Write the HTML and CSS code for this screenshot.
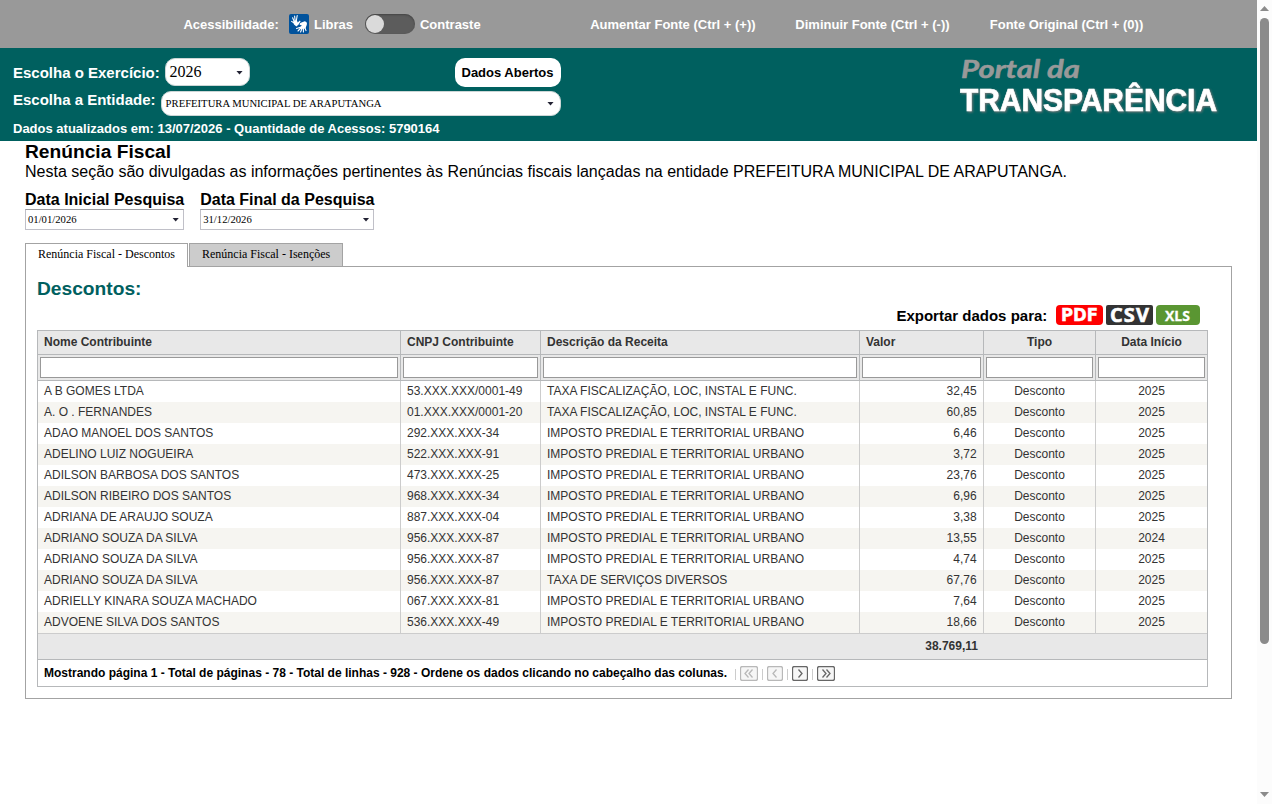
FILE: index.html
```html
<!DOCTYPE html>
<html lang="pt-br">
<head>
    <meta charset="UTF-8">
    <meta name="viewport" content="width=device-width, initial-scale=1.0">
    <title>Portal da Transparência</title>
    <link rel="stylesheet" href="styles.css">
</head>
<body>
    <div class="pagina">
        <div class="acessibilidade">
            <span class="rotulo">Acessibilidade:</span>
            <svg class="libras" width="20" height="20" viewBox="0 0 20 20">
                <rect width="20" height="20" rx="2" fill="#00529c"/>
                <g fill="none" stroke="#fff" stroke-linecap="round" stroke-linejoin="round">
                    <path stroke-width="1.1" d="M5.2 7.5L3.6 3.8M6.2 7L5.6 2M7.3 7L8.2 1.5M4.8 8.8L2.6 7.4"/>
                    <path stroke-width="1.1" d="M11.5 13.2L7.6 14.6M11.8 14L9 17M13 14.5L11.6 18M14.4 14.5V17.9M15.8 13.5L17 16.6"/>
                </g>
                <path fill="#fff" d="M4.2 7.4L7.9 6.2L8.7 8.4L10.9 6.6L11.6 7.3L9.6 10.6L7.4 12.4L5 10.6Z"/>
                <path fill="#fff" d="M11.2 8.9L15.7 7.2C17.7 7.4 18.4 9.3 17.7 11L16.4 14.6L12 15L10.8 13.2L12.9 11.4L10.6 10.8Z"/>
            </svg>
            <span class="texto-libras">Libras</span>
            <span class="chave"><span class="chave-botao"></span></span>
            <span class="texto-contraste">Contraste</span>
            <span class="aumentar">Aumentar Fonte (Ctrl + (+))</span>
            <span class="diminuir">Diminuir Fonte (Ctrl + (-))</span>
            <span>Fonte Original (Ctrl + (0))</span>
        </div>

        <div class="topo">
            <div class="filtros">
                <div class="linha-exercicio">
                    <label>Escolha o Exercício:</label>
                    <div class="combo combo-ano">2026<i class="seta"></i></div>
                    <button type="button" class="dados-abertos">Dados Abertos</button>
                </div>
                <div class="linha-entidade">
                    <label>Escolha a Entidade:</label>
                    <div class="combo combo-entidade">PREFEITURA MUNICIPAL DE ARAPUTANGA<i class="seta"></i></div>
                </div>
                <div class="atualizado">Dados atualizados em: 13/07/2026 - Quantidade de Acessos: 5790164</div>
            </div>
            <svg class="logo" width="270" height="74" viewBox="0 0 270 74">
                <text class="logo-portal" x="6" y="30" textLength="119" lengthAdjust="spacingAndGlyphs">Portal da</text>
                <text class="logo-nome" x="5" y="63" textLength="257" lengthAdjust="spacingAndGlyphs">TRANSPARÊNCIA</text>
            </svg>
        </div>

        <div class="conteudo">
            <h1>Renúncia Fiscal</h1>
            <p class="descricao">Nesta seção são divulgadas as informações pertinentes às Renúncias fiscais lançadas na entidade PREFEITURA MUNICIPAL DE ARAPUTANGA.</p>

            <div class="datas">
                <div class="data">
                    <label>Data Inicial Pesquisa</label>
                    <div class="data-campo">01/01/2026<i class="seta"></i></div>
                </div>
                <div class="data">
                    <label>Data Final da Pesquisa</label>
                    <div class="data-campo">31/12/2026<i class="seta"></i></div>
                </div>
            </div>

            <div class="abas">
                <div class="aba ativa">Renúncia Fiscal - Descontos</div>
                <div class="aba">Renúncia Fiscal - Isenções</div>
            </div>

            <div class="painel">
                <h2>Descontos:</h2>
                <div class="exportar">
                    <span>Exportar dados para:</span>
                    <svg width="47" height="20" viewBox="0 0 47 20">
                        <rect width="47" height="20" rx="4" fill="#f00"/>
                        <text class="texto-pdf" x="5" y="16" textLength="37" lengthAdjust="spacingAndGlyphs">PDF</text>
                    </svg>
                    <svg width="47" height="20" viewBox="0 0 47 20">
                        <rect width="47" height="20" rx="2" fill="#333"/>
                        <text class="texto-csv" x="4" y="17" textLength="39" lengthAdjust="spacing">CSV</text>
                    </svg>
                    <svg width="44" height="20" viewBox="0 0 44 20">
                        <rect width="44" height="20" rx="4" fill="#5a9632"/>
                        <text class="texto-xls" x="9" y="16" textLength="25" lengthAdjust="spacingAndGlyphs">XLS</text>
                    </svg>
                </div>

                <div class="grade">
                    <table>
                        <colgroup>
                            <col class="c-nome"><col class="c-cnpj"><col class="c-receita"><col class="c-valor"><col class="c-tipo"><col class="c-data">
                        </colgroup>
                        <thead>
                            <tr>
                                <th>Nome Contribuinte</th>
                                <th>CNPJ Contribuinte</th>
                                <th>Descrição da Receita</th>
                                <th>Valor</th>
                                <th class="centro">Tipo</th>
                                <th class="centro">Data Início</th>
                            </tr>
                            <tr class="busca">
                                <td><input type="text"></td>
                                <td><input type="text"></td>
                                <td><input type="text"></td>
                                <td><input type="text"></td>
                                <td><input type="text"></td>
                                <td><input type="text"></td>
                            </tr>
                        </thead>
                        <tbody>
                            <tr><td>A B GOMES LTDA</td><td>53.XXX.XXX/0001-49</td><td>TAXA FISCALIZAÇÃO, LOC, INSTAL E FUNC.</td><td>32,45</td><td>Desconto</td><td>2025</td></tr>
                            <tr><td>A. O . FERNANDES</td><td>01.XXX.XXX/0001-20</td><td>TAXA FISCALIZAÇÃO, LOC, INSTAL E FUNC.</td><td>60,85</td><td>Desconto</td><td>2025</td></tr>
                            <tr><td>ADAO MANOEL DOS SANTOS</td><td>292.XXX.XXX-34</td><td>IMPOSTO PREDIAL E TERRITORIAL URBANO</td><td>6,46</td><td>Desconto</td><td>2025</td></tr>
                            <tr><td>ADELINO LUIZ NOGUEIRA</td><td>522.XXX.XXX-91</td><td>IMPOSTO PREDIAL E TERRITORIAL URBANO</td><td>3,72</td><td>Desconto</td><td>2025</td></tr>
                            <tr><td>ADILSON BARBOSA DOS SANTOS</td><td>473.XXX.XXX-25</td><td>IMPOSTO PREDIAL E TERRITORIAL URBANO</td><td>23,76</td><td>Desconto</td><td>2025</td></tr>
                            <tr><td>ADILSON RIBEIRO DOS SANTOS</td><td>968.XXX.XXX-34</td><td>IMPOSTO PREDIAL E TERRITORIAL URBANO</td><td>6,96</td><td>Desconto</td><td>2025</td></tr>
                            <tr><td>ADRIANA DE ARAUJO SOUZA</td><td>887.XXX.XXX-04</td><td>IMPOSTO PREDIAL E TERRITORIAL URBANO</td><td>3,38</td><td>Desconto</td><td>2025</td></tr>
                            <tr><td>ADRIANO SOUZA DA SILVA</td><td>956.XXX.XXX-87</td><td>IMPOSTO PREDIAL E TERRITORIAL URBANO</td><td>13,55</td><td>Desconto</td><td>2024</td></tr>
                            <tr><td>ADRIANO SOUZA DA SILVA</td><td>956.XXX.XXX-87</td><td>IMPOSTO PREDIAL E TERRITORIAL URBANO</td><td>4,74</td><td>Desconto</td><td>2025</td></tr>
                            <tr><td>ADRIANO SOUZA DA SILVA</td><td>956.XXX.XXX-87</td><td>TAXA DE SERVIÇOS DIVERSOS</td><td>67,76</td><td>Desconto</td><td>2025</td></tr>
                            <tr><td>ADRIELLY KINARA SOUZA MACHADO</td><td>067.XXX.XXX-81</td><td>IMPOSTO PREDIAL E TERRITORIAL URBANO</td><td>7,64</td><td>Desconto</td><td>2025</td></tr>
                            <tr><td>ADVOENE SILVA DOS SANTOS</td><td>536.XXX.XXX-49</td><td>IMPOSTO PREDIAL E TERRITORIAL URBANO</td><td>18,66</td><td>Desconto</td><td>2025</td></tr>
                        </tbody>
                        <tfoot>
                            <tr><td colspan="3"></td><td>38.769,11</td><td colspan="2"></td></tr>
                        </tfoot>
                    </table>
                    <div class="paginacao">
                        <span class="resumo">Mostrando página 1 - Total de páginas - 78 - Total de linhas - 928 - Ordene os dados clicando no cabeçalho das colunas.</span>
                        <i class="separador"></i>
                        <svg class="pg inativo" width="18" height="15" viewBox="0 0 18 15"><rect x=".5" y=".5" width="17" height="14" rx="2"/><path d="M8.5 3.5L5 7.5L8.5 11.5M12.5 3.5L9 7.5L12.5 11.5"/></svg>
                        <i class="separador"></i>
                        <svg class="pg inativo" width="16" height="15" viewBox="0 0 16 15"><rect x=".5" y=".5" width="15" height="14" rx="2"/><path d="M9.5 3.5L6 7.5L9.5 11.5"/></svg>
                        <i class="separador"></i>
                        <svg class="pg" width="16" height="15" viewBox="0 0 16 15"><rect x=".5" y=".5" width="15" height="14" rx="2"/><path d="M6.5 3.5L10 7.5L6.5 11.5"/></svg>
                        <i class="separador"></i>
                        <svg class="pg" width="18" height="15" viewBox="0 0 18 15"><rect x=".5" y=".5" width="17" height="14" rx="2"/><path d="M5.5 3.5L9 7.5L5.5 11.5M9.5 3.5L13 7.5L9.5 11.5"/></svg>
                    </div>
                </div>
            </div>
        </div>
    </div>

    <div class="rolagem">
        <i class="rolagem-cima"></i>
        <i class="rolagem-barra"></i>
        <i class="rolagem-baixo"></i>
    </div>
</body>
</html>
```
FILE: styles.css
```css
* {
    box-sizing: border-box;
}

body {
    margin: 0;
    height: 804px;
    display: flex;
    overflow: hidden;
    background-color: #fff;
    color: #000;
    font-family: "Liberation Sans", Arial, sans-serif;
}

.pagina {
    width: 1257px;
}

/* barra cinza */
.acessibilidade {
    height: 48px;
    padding-left: 183.4px;
    display: flex;
    align-items: center;
    background-color: #999;
    color: #fff;
    font-size: 13px;
    font-weight: bold;
    white-space: nowrap;
}

.rotulo {
    width: 105.6px;
}

.texto-libras {
    width: 51px;
    margin-left: 5px;
}

.chave {
    width: 50px;
    height: 20px;
    border-radius: 10px;
    background-color: #5c5c5c;
    box-shadow: inset 0 1px 2px #444;
}

.chave-botao {
    display: block;
    width: 18px;
    height: 18px;
    margin: 1px;
    border-radius: 50%;
    background-color: #dadada;
}

.texto-contraste {
    width: 170.2px;
    margin-left: 5px;
}

.aumentar {
    width: 205.2px;
}

.diminuir {
    width: 194.4px;
}

/* cabecalho verde */
.topo {
    height: 93px;
    padding-left: 13px;
    display: flex;
    justify-content: space-between;
    background-color: #00605f;
    color: #fff;
    font-weight: bold;
}

.filtros {
    width: 548px;
    padding-top: 10px;
    font-size: 15px;
}

.linha-exercicio {
    height: 33px;
    display: flex;
    align-items: flex-start;
}

.linha-exercicio label {
    width: 152px;
    line-height: 29px;
}

.linha-entidade {
    height: 29px;
    display: flex;
    align-items: flex-start;
}

.linha-entidade label {
    width: 148px;
    line-height: 18px;
}

.combo {
    display: flex;
    align-items: center;
    justify-content: space-between;
    border: 1px solid #ccd6d6;
    background-color: #fff;
    color: #000;
    font-family: "Liberation Serif", "Times New Roman", serif;
    font-weight: normal;
}

.combo-ano {
    width: 85px;
    height: 28px;
    padding: 0 6px 0 3.6px;
    border-radius: 10px;
    font-size: 16px;
}

.combo-entidade {
    width: 400px;
    height: 25px;
    padding: 0 6px 1px 3.6px;
    border-radius: 10px;
    font-size: 10.67px;
}

.seta {
    width: 7px;
    height: 4px;
    margin-top: 1px;
    background-color: #223;
    clip-path: polygon(0 0, 100% 0, 50% 100%);
}

.dados-abertos {
    width: 106px;
    height: 29px;
    margin-left: auto;
    padding: 0 1px 0 0;
    border: 0;
    border-radius: 10px;
    background-color: #fff;
    color: #000;
    font: bold 13px "Liberation Sans", Arial, sans-serif;
}

.atualizado {
    font-size: 13px;
    line-height: 17px;
}

.logo {
    margin-right: 32px;
    overflow: visible;
}

.logo-portal {
    fill: #999;
    stroke: #999;
    stroke-width: 0.5;
    stroke-linejoin: round;
    font: italic bold 25px Lato, sans-serif;
}

.logo-nome {
    fill: #fff;
    stroke: #fff;
    stroke-width: 0.7;
    font: bold 32px "Liberation Sans", Arial, sans-serif;
    filter: drop-shadow(1px 1px 1px #777);
}

/* conteudo */
.conteudo {
    padding-left: 25px;
}

h1 {
    margin: 0;
    font-size: 19.2px;
    line-height: 22px;
}

.descricao {
    margin: 0;
    font-size: 16px;
    line-height: 18px;
}

.datas {
    margin-top: 9px;
    display: flex;
    gap: 16px;
}

.data label {
    display: block;
    font-size: 16px;
    font-weight: bold;
    line-height: 19px;
}

.data-campo {
    height: 21px;
    padding: 0 4px 1px 2px;
    display: flex;
    align-items: center;
    justify-content: space-between;
    border: 1px solid #c0c0c8;
    border-top-color: #9d9da1;
    font-family: "Liberation Serif", "Times New Roman", serif;
    font-size: 10.67px;
}

.abas {
    margin-top: 13px;
    display: flex;
    align-items: flex-start;
    gap: 1px;
    font-family: "Liberation Serif", "Times New Roman", serif;
    font-size: 12px;
}

.aba {
    height: 23px;
    padding: 0 12px;
    border: 1px solid #a3a3a3;
    border-bottom: 0;
    background-color: #ccc;
    line-height: 21px;
}

.ativa {
    height: 24px;
    margin-bottom: -1px;
    background-color: #fff;
    position: relative;
}

.painel {
    width: 1207px;
    height: 433px;
    padding: 11px;
    border: 1px solid #a3a3a3;
}

h2 {
    margin: 0;
    color: #00605f;
    font-size: 19.2px;
    line-height: 22px;
}

.exportar {
    height: 30px;
    padding: 5px 20px 5px 0;
    display: flex;
    justify-content: flex-end;
    gap: 3px;
    font-size: 15px;
    font-weight: bold;
    line-height: 21px;
}

.exportar svg {
    overflow: visible;
}

.exportar span {
    margin-right: 5.7px;
}

.exportar text {
    fill: #fff;
}

.texto-pdf {
    font: bold 17px "DejaVu Sans", sans-serif;
    stroke: #fff;
    stroke-width: 0.4;
}

.texto-csv {
    font: bold 20px "Open Sans", sans-serif;
    stroke: #fff;
    stroke-width: 0.6;
}

.texto-xls {
    font: bold 15px "Open Sans", sans-serif;
    stroke: #fff;
    stroke-width: 0.3;
}

.grade {
    width: 1171px;
    border: 1px solid #b6b8ba;
    color: #333;
    font-size: 12px;
}

table {
    width: 1169px;
    table-layout: fixed;
    border-collapse: separate;
    border-spacing: 0;
}

.c-nome { width: 363px; }
.c-cnpj { width: 140px; }
.c-receita { width: 319px; }
.c-valor { width: 124px; }
.c-tipo { width: 112px; }
.c-data { width: 111px; }

th,
td {
    padding: 0 6px;
    border-right: 1px solid #b6b8ba;
    text-align: left;
}

th:last-child,
td:last-child {
    border-right: 0;
}

th {
    height: 24px;
    border-bottom: 1px solid #b6b8ba;
    background-color: #e8e8e8;
    line-height: 22px;
    vertical-align: top;
}

th.centro {
    text-align: center;
}

.busca td {
    height: 26px;
    padding: 2px;
    border-bottom: 1px solid #b6b8ba;
    background-color: #e8e8e8;
}

.busca input {
    display: block;
    width: 100%;
    height: 21px;
    border: 1px solid #999;
    background-color: #fff;
}

tbody td {
    height: 21px;
    border-right-color: #ccc;
    line-height: 21px;
}

tbody tr:nth-child(even) {
    background-color: #f6f5f1;
}

tbody td:nth-child(4) {
    padding-right: 6.4px;
    text-align: right;
}

tbody td:nth-child(n+5) {
    text-align: center;
}

tfoot td {
    height: 27px;
    padding: 0 6px 2px;
    border-top: 1px solid #ccc;
    border-bottom: 1px solid #b6b8ba;
    border-right: 0;
    background-color: #e8e8e8;
    font-weight: bold;
    text-align: right;
}

.paginacao {
    height: 26px;
    padding-left: 6px;
    display: flex;
    align-items: center;
    color: #000;
    font-weight: bold;
}

.resumo {
    width: 691px;
    white-space: nowrap;
}

.separador {
    width: 1px;
    height: 11px;
    margin-top: 2px;
    background-color: #ccc;
}

.pg {
    margin: 1px 4px 0;
    fill: none;
    stroke: #666;
    stroke-width: 1.3;
}

.pg rect {
    fill: #f6f6f6;
}

.inativo {
    stroke: #b8b8b8;
}

/* barra de rolagem */
.rolagem {
    width: 15px;
    display: flex;
    flex-direction: column;
    align-items: center;
    background-color: #fcfcfc;
}

.rolagem-cima,
.rolagem-baixo {
    width: 9px;
    height: 5px;
    background-color: #8b8b8b;
}

.rolagem-cima {
    margin: 6px 0 7px;
    clip-path: polygon(50% 0, 100% 100%, 0 100%);
}

.rolagem-barra {
    width: 9px;
    height: 626px;
    border-radius: 5px;
    background-color: #8b8b8b;
}

.rolagem-baixo {
    margin-top: auto;
    margin-bottom: 7px;
    clip-path: polygon(0 0, 100% 0, 50% 100%);
}
```
